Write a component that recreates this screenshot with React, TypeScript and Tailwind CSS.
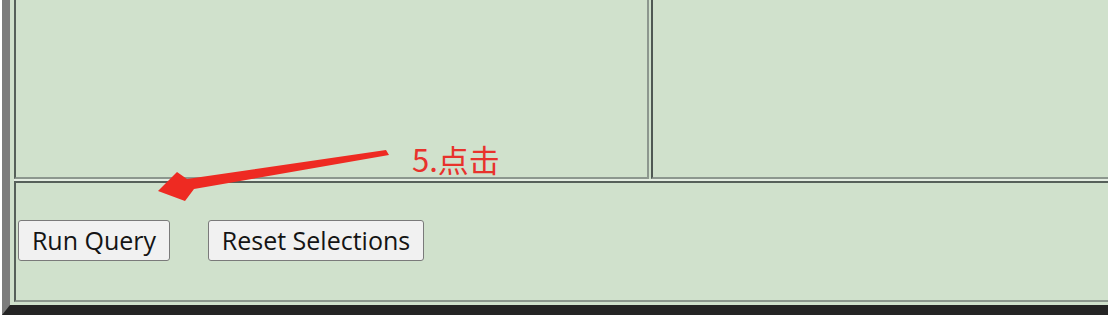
import React from "react";

export default function App() {
  return (
    <div className="w-[1108px] h-[322px] overflow-hidden bg-white relative" style={{ fontFamily: '"Open Sans", "Noto Sans", sans-serif' }}>
      <div className="ml-[2px] h-[315px] border-l-[8px] border-b-[10px] border-l-[#7c7c7c] border-b-[#242424] bg-[#d0e1cc] pl-[4px] pb-[3px] flex flex-col">
        <div className="flex h-[179px] gap-[2px]">
          <div className="w-[635px] h-full border-l-2 border-b-2 border-r-2 border-l-[#56605a] border-b-[#8c978e] border-r-[#8c978e]" />
          <div className="flex-1 h-full border-l-2 border-b-2 border-l-[#4f5853] border-b-[#8c978e]" />
        </div>
        <div className="h-[2px] bg-[#e4ede2]" />
        <div className="flex-1 border-l-2 border-t-2 border-b-2 border-l-[#56605a] border-t-[#56605a] border-b-[#8c978e] flex items-start pt-[37px] pl-[2px] gap-[38px]">
          <button className="h-[41px] w-[152px] rounded-[3px] border border-[#7a7a7a] bg-[#f1f1f1] text-[#141414] text-[25px] leading-none flex items-center justify-center pb-[1px]">
            Run Query
          </button>
          <button className="h-[41px] w-[216px] rounded-[3px] border border-[#7a7a7a] bg-[#f1f1f1] text-[#141414] text-[25px] leading-none flex items-center justify-center pb-[1px]">
            Reset Selections
          </button>
        </div>
      </div>
      <svg className="absolute left-0 top-0 pointer-events-none" width="1108" height="322" viewBox="0 0 1108 322">
        <polygon
          points="386,150 389,155 194,189 185,201 158,191 177,172 187,179"
          fill="#ee2a22"
        />
      </svg>
      <div
        className="absolute left-[412px] top-[143px] text-[31px] leading-none text-[#e8322c] pointer-events-none"
        style={{ fontFamily: '"Noto Sans CJK SC", "Noto Sans", sans-serif' }}
      >
        5.点击
      </div>
    </div>
  );
}
